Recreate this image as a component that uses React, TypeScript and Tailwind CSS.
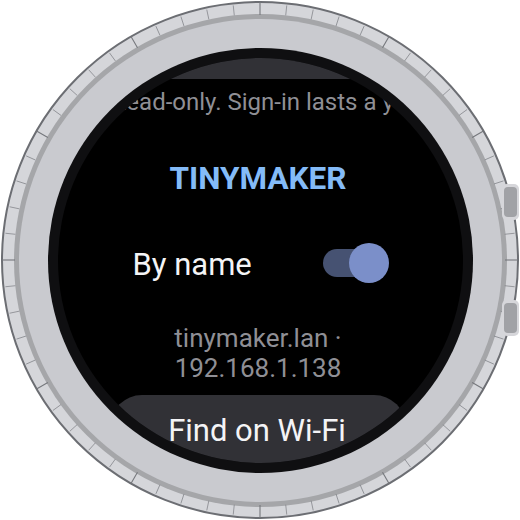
const ticks = Array.from({ length: 60 }, (_, i) => i);

function TickMarks() {
  return (
    <svg className="absolute inset-0" width={520} height={520} viewBox="0 0 520 520">
      {ticks.map((i) => {
        const major = i % 5 === 0;
        return (
          <line
            key={i}
            x1={260}
            y1={major ? 2 : 4}
            x2={260}
            y2={major ? 15 : 14}
            stroke={major ? '#75777c' : '#7f8186'}
            strokeWidth={major ? 1.1 : 0.7}
            transform={`rotate(${i * 6} 260 260)`}
          />
        );
      })}
    </svg>
  );
}

function SideButton({ className }: { className: string }) {
  return (
    <div className={`absolute right-px flex h-[36px] w-[17px] items-center justify-center rounded-[5px] bg-[#d6d6da] ${className}`}>
      <div className="h-[30px] w-[13px] rounded-[4px] bg-[#a1a2a6]" />
    </div>
  );
}

export default function App() {
  return (
    <div className="relative h-[520px] w-[520px] bg-white font-['Roboto',sans-serif]">
      {/* Case */}
      <div className="absolute inset-px rounded-full border-[2.5px] border-[#6c6e73] bg-[#d5d6da] p-[10.5px]">
        <div className="h-full w-full rounded-full bg-[#a5a6a9] p-[5px]">
          <div className="h-full w-full rounded-full bg-[#c9cacf] p-[29px]">
            <div className="h-full w-full rounded-full bg-[#0f0f11] p-[10px]">
              {/* Screen */}
              <div className="flex h-full w-full flex-col items-center overflow-hidden rounded-full bg-black pr-[4px]">
                <div className="h-[21px] w-full shrink-0 bg-[#313136]" />
                <p className="mt-[7px] whitespace-nowrap pl-[28px] text-[24px] leading-[32px] text-[#8f8f95]">
                  Read-only. Sign-in lasts a year.
                </p>
                <h1 className="mt-[44px] text-[31.5px] font-bold leading-[34px] text-[#84bbf8]">TINYMAKER</h1>
                <div className="mt-[46px] flex w-[251px] items-center justify-between">
                  <span className="pt-[3px] text-[31px] leading-[40px] text-[#f4f4f6]">By name</span>
                  <div className="-mr-[1px] flex h-[28px] w-[62px] shrink-0 items-center justify-end rounded-full bg-[#465272]">
                    <div className="-mr-[4px] h-[40px] w-[40px] shrink-0 rounded-full bg-[#7b8fc9]" />
                  </div>
                </div>
                <p className="mt-[38px] w-[240px] text-center text-[26px] leading-[30px] text-[#8f8f95]">
                  tinymaker.lan · 192.168.1.138
                </p>
                <button className="mt-[12px] h-[90px] w-[296px] shrink-0 rounded-[32px] bg-[#313136] pb-[18px] pr-[2px] text-[31px] leading-[36px] text-[#f4f4f6]">
                  Find on Wi-Fi
                </button>
              </div>
            </div>
          </div>
        </div>
      </div>
      <TickMarks />
      <SideButton className="top-[184px]" />
      <SideButton className="top-[300px]" />
    </div>
  );
}
